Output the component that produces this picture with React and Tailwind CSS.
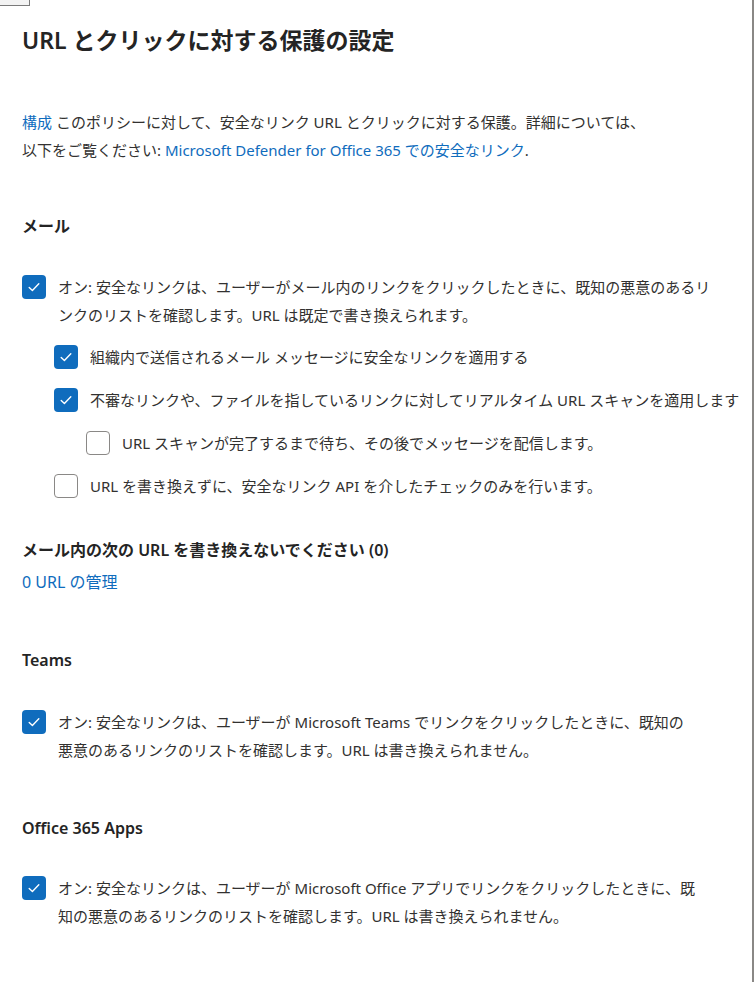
import React from 'react';

const Check = ({ checked }) => (
  <span
    className={`flex h-[24px] w-[24px] shrink-0 items-center justify-center rounded-[4px] ${
      checked ? 'bg-[#0f6cbd]' : 'border border-[#8a8886] bg-white'
    }`}
  >
    {checked && (
      <svg width="16" height="16" viewBox="0 0 16 16" fill="none">
        <path d="M3.2 8.4 L6.4 11.4 L12.8 4.8" stroke="#ffffff" strokeWidth="1.4" strokeLinecap="round" strokeLinejoin="round" />
      </svg>
    )}
  </span>
);

const Option = ({ checked, className = '', children }) => (
  <label className={`flex items-start gap-[12px] ${className}`}>
    <span className="mt-[2px]">
      <Check checked={checked} />
    </span>
    <span className="whitespace-nowrap text-[15px] leading-[28px] text-[#323130]">{children}</span>
  </label>
);

const SectionTitle = ({ className = '', children }) => (
  <h3 className={`text-[16px] font-semibold leading-[28px] text-[#242424] ${className}`}>{children}</h3>
);

export default function App() {
  return (
    <div
      className="min-h-[982px] w-[754px] border-r-2 border-[#8a8886] bg-white"
      style={{ fontFamily: '"Noto Sans", "Noto Sans CJK JP", sans-serif' }}
    >
      <div className="h-[6px] w-[30px] border-b border-r border-[#7a7a7a] bg-[#f3f3f3]" />

      <div className="px-[22px] pb-[40px]">
        <h2 className="mt-[20px] text-[23px] font-semibold leading-[28px] text-[#242424]">
          URL とクリックに対する保護の設定
        </h2>

        <p className="mt-[54px] whitespace-nowrap text-[15px] leading-[28px] text-[#323130]">
          <a className="text-[#0f6cbd]">構成</a> このポリシーに対して、安全なリンク URL とクリックに対する保護。詳細については、
          <br />
          以下をご覧ください: <a className="text-[#0f6cbd]">Microsoft Defender for Office 365 での安全なリンク</a>.
        </p>

        <SectionTitle className="mt-[48px]">メール</SectionTitle>

        <Option checked className="mt-[33px]">
          オン: 安全なリンクは、ユーザーがメール内のリンクをクリックしたときに、既知の悪意のあるリ
          <br />
          ンクのリストを確認します。URL は既定で書き換えられます。
        </Option>

        <div className="mt-[14px] flex flex-col gap-[15px] pl-[32px]">
          <Option checked>組織内で送信されるメール メッセージに安全なリンクを適用する</Option>
          <Option checked>不審なリンクや、ファイルを指しているリンクに対してリアルタイム URL スキャンを適用します</Option>
          <Option className="pl-[32px]">URL スキャンが完了するまで待ち、その後でメッセージを配信します。</Option>
          <Option>URL を書き換えずに、安全なリンク API を介したチェックのみを行います。</Option>
        </div>

        <SectionTitle className="mt-[36px]">メール内の次の URL を書き換えないでください (0)</SectionTitle>
        <a className="mt-[4px] block text-[16px] leading-[28px] text-[#0f6cbd]">0 URL の管理</a>

        <SectionTitle className="mt-[50px]">Teams</SectionTitle>
        <Option checked className="mt-[34px]">
          オン: 安全なリンクは、ユーザーが Microsoft Teams でリンクをクリックしたときに、既知の
          <br />
          悪意のあるリンクのリストを確認します。URL は書き換えられません。
        </Option>

        <SectionTitle className="mt-[50px]">Office 365 Apps</SectionTitle>
        <Option checked className="mt-[32px]">
          オン: 安全なリンクは、ユーザーが Microsoft Office アプリでリンクをクリックしたときに、既
          <br />
          知の悪意のあるリンクのリストを確認します。URL は書き換えられません。
        </Option>
      </div>
    </div>
  );
}
